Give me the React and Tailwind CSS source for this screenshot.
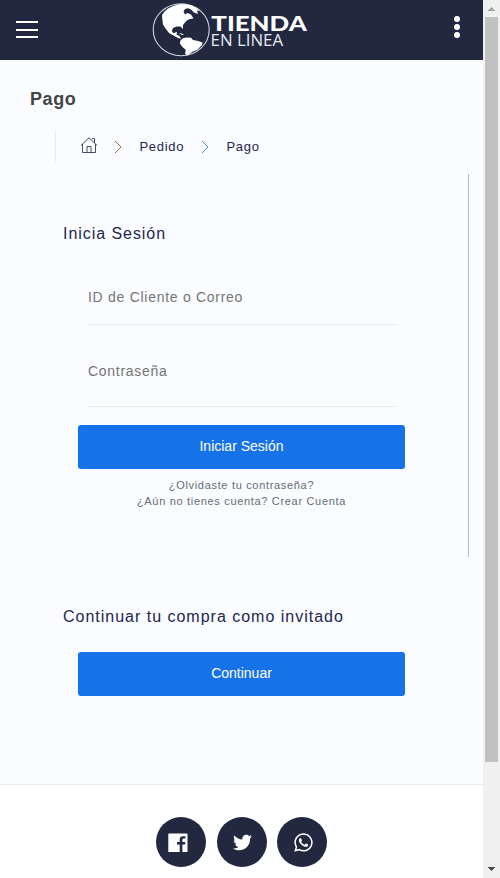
import { FaTwitter, FaWhatsapp } from 'react-icons/fa'

function Logo() {
  return (
    <svg width="160" height="60" viewBox="0 0 160 60" className="text-white">
      <ellipse cx="31.2" cy="29.8" rx="28" ry="26" fill="none" stroke="#d3d6de" strokeWidth="1.1" />
      {/* North America */}
      <path
        fill="currentColor"
        d="M12 15 L14.5 11.5 L18 8.5 L23 6 L29 4.3 L34 4 L41 5.2 L46 7.5 L49.5 11 L47 10.5 L48 14 L44 12.5 L41 9.5 L38 8.2 L35 9 L33.5 11.5 L35 14.5 L37.5 13 L41 14.5 L43.5 18.5 L40 19 L37.5 20 L35 22.5 L33 25 L33 29 L30.5 26.5 L26.5 26.5 L23 28 L21.8 31 L23.5 33.3 L27 31.8 L26.5 34.5 L29.5 36 L31 39 L27.5 37.8 L23.5 35.5 L19 33 L15.5 28.5 L13 24.5 L12.4 20 Z"
      />
      <path fill="currentColor" d="M29 33.2 L32 33.5 L34 35 L31.5 34.8 Z" />
      {/* South America */}
      <path
        fill="currentColor"
        d="M30.5 40.5 L32.5 38.5 L36 37.5 L41 37.8 L43 40 L48 41 L52.5 42.5 L52 45 L49.5 47.5 L47 50 L43 51.5 L40 53.5 L37.5 55.6 L35 53.8 L35.8 50 L32.5 47 L29.8 43.5 Z"
      />
      <text x="61.3" y="31.2" fill="currentColor" fontSize="20.2" fontWeight="900" fontFamily="Lato, sans-serif" textLength="95.5" lengthAdjust="spacingAndGlyphs">
        TIENDA
      </text>
      <text x="60.6" y="45.6" fill="#e8eaf0" fontSize="15.4" fontFamily="Open Sans, Noto Sans, sans-serif" textLength="72.5" lengthAdjust="spacingAndGlyphs">
        EN LINEA
      </text>
    </svg>
  )
}

function HomeIcon() {
  return (
    <svg width="18" height="18" viewBox="0 0 18 18" fill="none" stroke="#343858" strokeWidth="0.9">
      <path d="M1 8.4 L9 0.8 L17 8.4 M2.5 7 V15.5 H15.5 V7 M7 15.5 V9.5 H11 V15.5 M12 1.6 H14.5 V6" />
    </svg>
  )
}

function Chevron({ color }) {
  return (
    <svg width="8" height="14" viewBox="0 0 8 14" fill="none" stroke={color} strokeWidth="1">
      <path d="M1 1 L7 7 L1 13" />
    </svg>
  )
}

function FacebookIcon() {
  return (
    <svg width="20" height="20" viewBox="0 0 20 20">
      <path fill="#fff" d="M1 0.4 H18.8 Q19.5 0.4 19.5 1.1 V18.4 Q19.5 19.1 18.8 19.1 H14.4 V11.4 H17 L17.3 9 H14.4 V7 Q14.4 5.6 15.8 5.6 H17.4 V3.2 H15.2 Q11.7 3.2 11.7 6.6 V9 H9 V11.4 H11.7 V19.1 H1 Q0.3 19.1 0.3 18.4 V1.1 Q0.3 0.4 1 0.4 Z" />
    </svg>
  )
}

function Scrollbar() {
  return (
    <div className="flex w-[17px] shrink-0 flex-col items-center bg-[#f0f0f0]">
      <svg width="17" height="17" shapeRendering="crispEdges">
        <path d="M5 11 L8.5 7 L12 11 Z" fill="#a3a3a3" />
      </svg>
      <div className="h-[745px] w-[13px] bg-[#c1c1c1]" />
      <div className="grow" />
      <svg width="17" height="17" shapeRendering="crispEdges">
        <path d="M5 6 H12 L8.5 10 Z" fill="#505050" />
      </svg>
    </div>
  )
}

function App() {
  return (
    <div className="flex h-[878px] w-[500px] overflow-hidden bg-white font-['Liberation_Sans',Arial,sans-serif]">
      <div className="flex w-[483px] flex-col">
        <header className="flex h-[60px] shrink-0 items-start justify-between bg-[#21283f]">
          <button className="mt-[21px] ml-4 flex w-[22px] flex-col gap-[5.5px]">
            <span className="h-[2px] w-full bg-white" />
            <span className="h-[2px] w-full bg-white" />
            <span className="h-[2px] w-full bg-white" />
          </button>
          <div className="ml-[112px]">
            <Logo />
          </div>
          <button className="mt-4 mr-[23px] ml-auto flex flex-col gap-[2px]">
            <span className="size-[6px] rounded-full bg-white" />
            <span className="size-[6px] rounded-full bg-white" />
            <span className="size-[6px] rounded-full bg-white" />
          </button>
        </header>

        <main className="flex h-[725px] shrink-0 flex-col border-b border-[#ebebeb] bg-[#fafcff]">
          <h1 className="mt-[27px] ml-[30px] text-[18px] leading-6 font-bold tracking-[0.6px] text-[#444]">Pago</h1>

          <nav className="mt-[19px] ml-[55px] flex h-8 items-center border-l border-[#ebebeb] pl-6 text-[13px] tracking-[0.7px] text-[#23264d]">
            <HomeIcon />
            <span className="mt-px ml-4"><Chevron color="#9a6a58" /></span>
            <span className="mt-px ml-[17.5px] w-[61.5px]">Pedido</span>
            <span className="mt-px"><Chevron color="#4b91b8" /></span>
            <span className="mt-px ml-[17.5px]">Pago</span>
          </nav>

          {/* Login */}
          <section className="mt-3 mr-[14px] h-[383px] border-r border-[#b9bbbd] pl-[63px]">
            <h2 className="pt-[48px] text-[16px] leading-6 tracking-[0.95px] text-[#23264d]">Inicia Sesión</h2>
            <div className="mt-[24px] ml-[25px] h-[55px] w-[308px] border-b border-[#e9ebed]">
              <input className="block h-[53px] w-full text-[14px] tracking-[0.72px] outline-none placeholder:text-[#757575]" placeholder="ID de Cliente o Correo" />
            </div>
            <div className="mt-[19px] ml-[25px] h-[63px] w-[308px] border-b border-[#e9ebed]">
              <input type="password" className="block h-[53px] w-full text-[14px] tracking-[0.72px] outline-none placeholder:text-[#757575]" placeholder="Contraseña" />
            </div>
            <button className="mt-[18px] ml-[15px] block h-11 w-[327px] rounded-[3px] bg-[#1572e8] pb-[2px] text-[14px] text-white">Iniciar Sesión</button>
            <div className="mt-2 ml-[15px] w-[327px] text-center text-[11px] leading-4 tracking-[0.68px] text-[#646c73]">
              <p>¿Olvidaste tu contraseña?</p>
              <p>¿Aún no tienes cuenta? Crear Cuenta</p>
            </div>
          </section>

          {/* Guest checkout */}
          <section className="pl-[63px]">
            <h2 className="mt-[48px] text-[16px] leading-6 tracking-[0.99px] text-[#23264d]">Continuar tu compra como invitado</h2>
            <button className="mt-[23px] ml-[15px] block h-11 w-[327px] rounded-[3px] bg-[#1572e8] pb-[2px] text-[14px] text-white">Continuar</button>
          </section>
        </main>

        <footer className="flex gap-[10.5px] pt-8 pl-[156px]">
          <a className="flex size-[50px] items-center justify-center rounded-full bg-[#21283f]">
            <span className="mt-[2px] mr-[6px]"><FacebookIcon /></span>
          </a>
          <a className="flex size-[50px] items-center justify-center rounded-full bg-[#21283f]">
            <FaTwitter className="mt-px ml-[2px] size-[19px] text-white" />
          </a>
          <a className="flex size-[50px] items-center justify-center rounded-full bg-[#21283f]">
            <FaWhatsapp className="ml-[3px] size-[21px] text-white" />
          </a>
        </footer>
      </div>
      <Scrollbar />
    </div>
  )
}

export default App
